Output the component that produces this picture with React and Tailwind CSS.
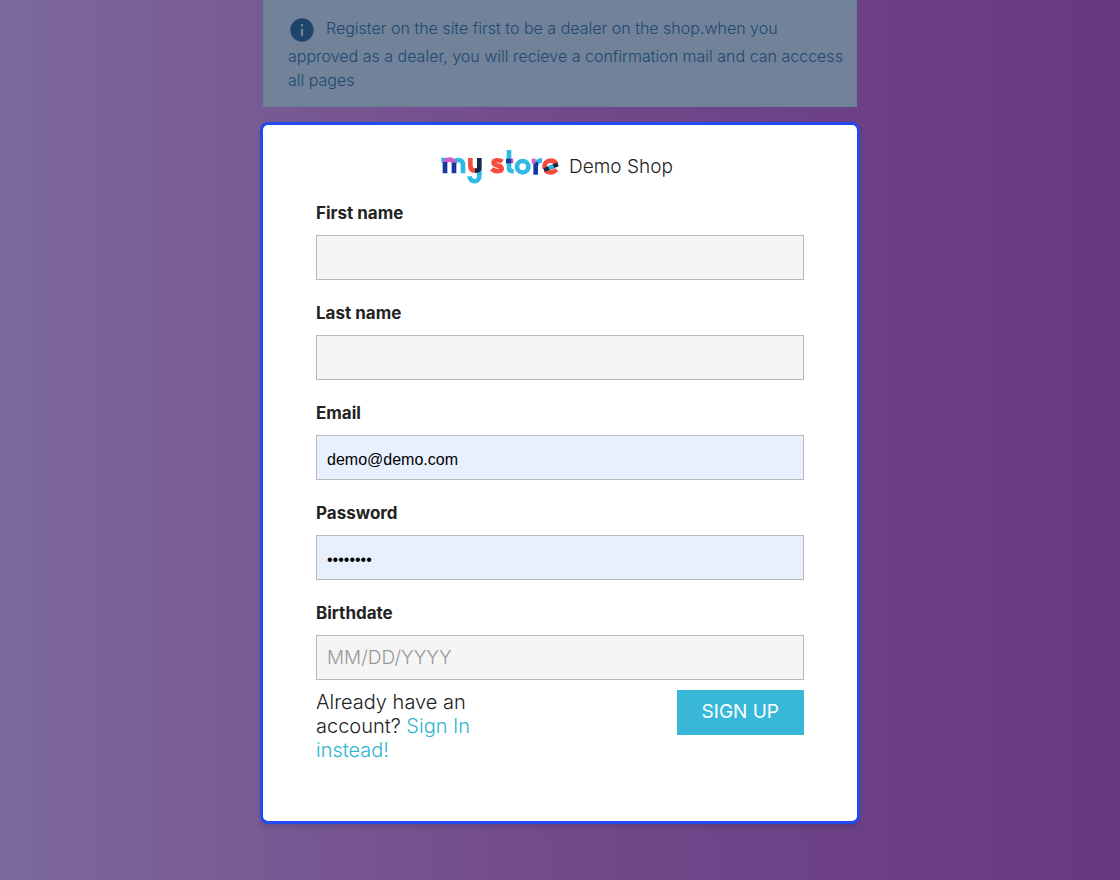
import { MdInfo } from "react-icons/md";

const inputBase =
  "h-[45px] w-full rounded-none border border-[#b9b9b9] px-2.5 outline-none";

function Field({ id, label, filled, ...props }) {
  return (
    <div className="flex flex-col gap-2.5">
      <label htmlFor={id} className="text-[17px] leading-6 font-bold">
        {label}
      </label>
      <input
        id={id}
        name={id}
        className={
          filled
            ? `${inputBase} bg-[#e8f0fe] pt-1 font-['Liberation_Sans',sans-serif] text-base text-black`
            : `${inputBase} bg-[#f5f5f5] text-[19px] font-light placeholder:text-[#999]`
        }
        {...props}
      />
    </div>
  );
}

function Logo() {
  return (
    <svg
      viewBox="33 27 354 105"
      className="h-[35px] w-[118px] shrink-0"
      fill="none"
      strokeWidth="14"
      role="img"
      aria-label="my store"
    >
      <path stroke="#2fb9e4" d="M34 60h13" />
      <path
        stroke="#2fb9e4"
        d="M72 72c0-9 6-12 13-12s14 4 14 14v26"
      />
      <path stroke="#cf5fc4" d="M45 70c0-8 5-11 13-11s14 4 14 11" />
      <path stroke="#14389f" d="M45 66v34M72 68v32" />
      <path stroke="#f54c3e" d="M121 54v21c0 11 5 17 14 17" />
      <path stroke="#2fb9e4" d="M148 86v21c0 22-29 22-29 2" />
      <path stroke="#112b46" d="M148 54v29c0 6-5 9-13 9" />
      <path
        stroke="#f54c3e"
        d="M217 65c-8-6-26-6-26 3 0 12 24 5 24 18 0 9-20 10-30 1"
      />
      <path stroke="#2fb9e4" d="M237 30v53c0 8 5 11 14 11" />
      <path stroke="#cf5fc4" d="M238 63h12" />
      <path stroke="#14389f" d="M237 56v14M228 63h15" />
      <circle cx="278" cy="80" r="17" stroke="#2fb9e4" />
      <path stroke="#2fb9e4" d="M318 76c2-10 7-15 18-15" />
      <path stroke="#14389f" d="M317 66v38" />
      <path stroke="#cf5fc4" d="M305 63h12" />
      <path
        stroke="#f54c3e"
        d="M345 86c-5-16 6-24 17-24 8 0 14 4 17 11M347 90c8 10 23 9 33-1"
      />
      <path stroke="#112b46" strokeWidth="12" d="M342 90l42-17" />
      <path stroke="#2fb9e4" strokeWidth="12" d="M356 84l14-6" />
    </svg>
  );
}

export default function App() {
  return (
    <div className="min-h-screen bg-linear-to-r from-[#7c699b] via-[#73498b] to-[#673880] pb-14 font-['Inter',sans-serif] text-[#232323]">
      <main className="mx-auto w-full max-w-[600px]">
        <div
          role="alert"
          className="mx-[3px] border border-[#667f9b] bg-[#718299] pt-[15px] pr-3 pb-3.5 pl-6 text-base leading-6 font-light text-[#204970]"
        >
          <MdInfo className="mr-2.5 inline size-7 align-middle text-[#1d456c]" />
          Register on the site first to be a dealer on the shop.when you
          approved as a dealer, you will recieve a confirmation mail and can
          acccess all pages
        </div>

        <section className="mt-[15px] rounded-lg border-[3px] border-[#214af0] bg-white px-[53px] pt-6 pb-[59px] shadow-md">
          <header className="flex items-center justify-center gap-2.5 pr-1.5">
            <Logo />
            <h1 className="text-[19px] leading-8 font-light">Demo Shop</h1>
          </header>

          <form className="mt-[17px]" onSubmit={(e) => e.preventDefault()}>
            <div className="flex flex-col gap-[21px]">
              <Field id="firstname" label="First name" type="text" />
              <Field id="lastname" label="Last name" type="text" />
              <Field
                id="email"
                label="Email"
                type="email"
                defaultValue="demo@demo.com"
                filled
              />
              <Field
                id="password"
                label="Password"
                type="password"
                defaultValue="demodemo"
                filled
              />
              <Field
                id="birthday"
                label="Birthdate"
                type="text"
                placeholder="MM/DD/YYYY"
              />
            </div>

            <div className="mt-2.5 flex items-start justify-between">
              <p className="w-40 text-xl leading-6 font-light">
                Already have an account?{" "}
                <a href="#signin" className="text-[#2fb5d2]">
                  Sign In instead!
                </a>
              </p>
              <button
                type="submit"
                className="h-[45px] bg-[#37b8d8] px-[25px] text-[19px] text-white"
              >
                SIGN UP
              </button>
            </div>
          </form>
        </section>
      </main>
    </div>
  );
}
